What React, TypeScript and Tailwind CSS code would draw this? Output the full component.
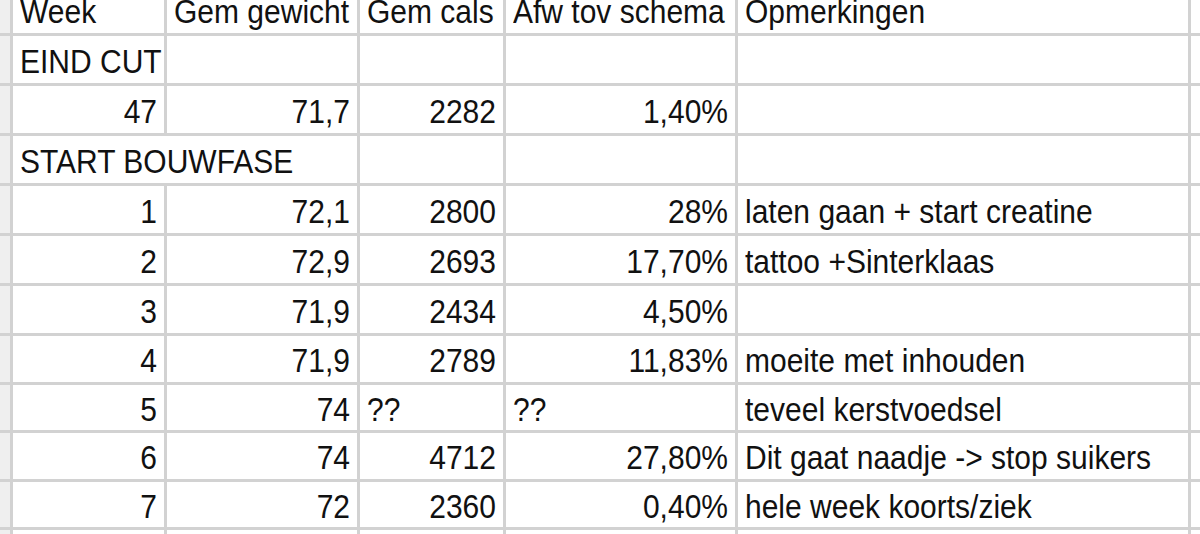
type Cell = { text?: string; align?: 'left' | 'right' };

const cols = ['w-[154px]', 'w-[193px]', 'w-[146px]', 'w-[232px]', 'w-[453px]'];

const rows: { h: string; cells: Cell[]; span?: boolean }[] = [
  { h: 'h-[50px]', cells: [{ text: 'EIND CUT' }, {}, {}, {}, {}] },
  {
    h: 'h-[50px]',
    cells: [
      { text: '47', align: 'right' },
      { text: '71,7', align: 'right' },
      { text: '2282', align: 'right' },
      { text: '1,40%', align: 'right' },
      {},
    ],
  },
  { h: 'h-[50px]', span: true, cells: [{ text: 'START BOUWFASE' }, {}, {}, {}, {}] },
  {
    h: 'h-[50px]',
    cells: [
      { text: '1', align: 'right' },
      { text: '72,1', align: 'right' },
      { text: '2800', align: 'right' },
      { text: '28%', align: 'right' },
      { text: 'laten gaan + start creatine' },
    ],
  },
  {
    h: 'h-[50px]',
    cells: [
      { text: '2', align: 'right' },
      { text: '72,9', align: 'right' },
      { text: '2693', align: 'right' },
      { text: '17,70%', align: 'right' },
      { text: 'tattoo +Sinterklaas' },
    ],
  },
  {
    h: 'h-[50px]',
    cells: [
      { text: '3', align: 'right' },
      { text: '71,9', align: 'right' },
      { text: '2434', align: 'right' },
      { text: '4,50%', align: 'right' },
      {},
    ],
  },
  {
    h: 'h-[49px]',
    cells: [
      { text: '4', align: 'right' },
      { text: '71,9', align: 'right' },
      { text: '2789', align: 'right' },
      { text: '11,83%', align: 'right' },
      { text: 'moeite met inhouden' },
    ],
  },
  {
    h: 'h-[48px]',
    cells: [
      { text: '5', align: 'right' },
      { text: '74', align: 'right' },
      { text: '??' },
      { text: '??' },
      { text: 'teveel kerstvoedsel' },
    ],
  },
  {
    h: 'h-[49px]',
    cells: [
      { text: '6', align: 'right' },
      { text: '74', align: 'right' },
      { text: '4712', align: 'right' },
      { text: '27,80%', align: 'right' },
      { text: 'Dit gaat naadje -> stop suikers' },
    ],
  },
  {
    h: 'h-[48px]',
    cells: [
      { text: '7', align: 'right' },
      { text: '72', align: 'right' },
      { text: '2360', align: 'right' },
      { text: '0,40%', align: 'right' },
      { text: 'hele week koorts/ziek' },
    ],
  },
];

const header = ['Week', 'Gem gewicht', 'Gem cals', 'Afw tov schema', 'Opmerkingen'];

// glyphs in the screenshot are a bit taller than Arial's proportions
const Txt = ({ children }: { children?: string }) =>
  children ? <span className="inline-block scale-y-[1.12]">{children}</span> : null;

export default function App() {
  return (
    <div
      className="w-[1200px] h-[534px] overflow-hidden bg-white text-[30px] leading-none text-[#111]"
      style={{ fontFamily: '"Liberation Sans", Arial, sans-serif' }}
    >
      {/* header row, top cut off */}
      <div className="flex h-[36px] border-b-[3px] border-[#d2d2d2]">
        <div className="w-[13px] shrink-0 bg-[#efefef] border-r-[3px] border-[#d2d2d2]" />
        {header.map((t, i) => (
          <div
            key={t}
            className={`${cols[i]} shrink-0 flex items-center pl-[7px] pb-[10px] border-r-[3px] border-[#d2d2d2] whitespace-nowrap`}
          >
            <Txt>{t}</Txt>
          </div>
        ))}
        <div className="flex-1" />
      </div>

      {rows.map((row, r) => (
        <div key={r} className={`flex ${row.h} border-b-[3px] border-[#d2d2d2]`}>
          <div className="w-[13px] shrink-0 bg-[#efefef] border-r-[3px] border-[#d2d2d2]" />
          {row.cells.map((c, i) => (
            <div
              key={i}
              className={`${cols[i]} shrink-0 flex items-center pt-[4px] whitespace-nowrap ${
                row.span && i === 0 ? 'overflow-visible' : 'border-r-[3px] border-[#d2d2d2]'
              } ${c.align === 'right' ? 'justify-end pr-[7px]' : 'pl-[7px]'}`}
            >
              <Txt>{c.text}</Txt>
            </div>
          ))}
          <div className="flex-1" />
        </div>
      ))}

      <div className="flex h-[20px]">
        <div className="w-[13px] shrink-0 bg-[#efefef] border-r-[3px] border-[#d2d2d2]" />
        {cols.map((w, i) => (
          <div key={i} className={`${w} shrink-0 border-r-[3px] border-[#d2d2d2]`} />
        ))}
      </div>
    </div>
  );
}
